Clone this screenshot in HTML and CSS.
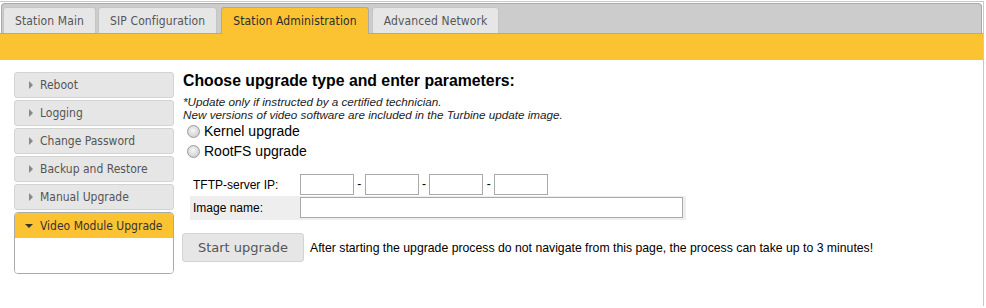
FILE: index.html
```html
<!DOCTYPE html>
<html>
<head>
<meta charset="utf-8">
<link rel="stylesheet" href="styles.css">
</head>
<body>
<div class="widget">
  <ul class="tabnav">
    <li class="tab">Station Main</li>
    <li class="tab">SIP Configuration</li>
    <li class="tab active">Station Administration</li>
    <li class="tab">Advanced Network</li>
  </ul>
  <div class="band"></div>
  <div class="page">
    <div class="side">
      <div class="item"><span class="tri-r"></span>Reboot</div>
      <div class="item"><span class="tri-r"></span>Logging</div>
      <div class="item"><span class="tri-r"></span>Change Password</div>
      <div class="item"><span class="tri-r"></span>Backup and Restore</div>
      <div class="item"><span class="tri-r"></span>Manual Upgrade</div>
      <div class="acc">
        <div class="acc-head"><span class="tri-d"></span>Video Module Upgrade</div>
        <div class="acc-body"></div>
      </div>
    </div>
    <div class="main">
      <h2 class="title">Choose upgrade type and enter parameters:</h2>
      <p class="note">*Update only if instructed by a certified technician.<br>New versions of video software are included in the Turbine update image.</p>
      <label class="opt"><input type="radio" name="t" class="radio">Kernel upgrade</label>
      <label class="opt"><input type="radio" name="t" class="radio">RootFS upgrade</label>
      <table class="params">
        <tr>
          <td class="lbl">TFTP-server IP:</td>
          <td class="val"><input class="ip" type="text"> - <input class="ip" type="text"> - <input class="ip" type="text"> - <input class="ip" type="text"></td>
        </tr>
        <tr class="alt">
          <td class="lbl">Image name:</td>
          <td class="val"><input class="img" type="text"></td>
        </tr>
      </table>
      <div class="actions">
        <button class="btn">Start upgrade</button>
        <span class="warn">After starting the upgrade process do not navigate from this page, the process can take up to 3 minutes!</span>
      </div>
    </div>
  </div>
</div>
</body>
</html>
```

FILE: styles.css
```css
html, body {
  margin: 0;
  padding: 0;
  background: #fff;
}
.widget {
  margin-top: 1px;
  width: 984px;
  border-top: 1px solid #c8c8c8;
  border-right: 1px solid #c8c8c8;
  padding-top: 1px;
  height: 305px;
  box-sizing: border-box;
}
.tabnav {
  list-style: none;
  margin: 0 1px 0 1px;
  padding: 3px 0 0 1px;
  height: 26px;
  background: #cccccc;
  border: 1px solid #aaaaaa;
  border-bottom: 0;
  border-radius: 4px 4px 0 0;
  display: flex;
  align-items: flex-end;
  gap: 2px;
}
.tab {
  font-family: "DejaVu Sans Condensed", "DejaVu Sans", sans-serif;
  font-stretch: condensed;
  font-size: 12px;
  letter-spacing: 0.12px;
  color: #555;
  background: #e6e6e6;
  border: 1px solid #c5c5c5;
  border-bottom: 0;
  border-radius: 3px 3px 0 0;
  padding: 1px 11px 0 11px;
  height: 24px;
  line-height: 24px;
}
.tab.active {
  background: #fbc232;
  border-color: #aaaaaa;
  color: #2b2b2b;
  height: 25px;
  margin: 0 1px -1px 2px;
}
.band {
  height: 26px;
  background: #fbc232;
  border-top: 1px solid #aaaaaa;
  margin-left: -1px;
}
.page {
  display: flex;
  padding: 12px 0 0 14px;
}
.side {
  width: 160px;
  display: flex;
  flex-direction: column;
  gap: 2px;
  font-family: "DejaVu Sans Condensed", "DejaVu Sans", sans-serif;
  font-stretch: condensed;
  font-size: 12px;
}
.item {
  height: 24px;
  line-height: 24px;
  background: #e6e6e6;
  border: 1px solid #d3d3d3;
  border-radius: 3px;
  color: #555;
  display: flex;
  align-items: center;
}
.tri-r {
  width: 0;
  height: 0;
  border-left: 4px solid #888;
  border-top: 4px solid transparent;
  border-bottom: 4px solid transparent;
  margin: 0 7px 0 14px;
}
.acc {
  border: 1px solid #aaaaaa;
  border-radius: 4px;
  overflow: hidden;
}
.acc-head {
  height: 25px;
  background: #fbc232;
  color: #333;
  display: flex;
  align-items: center;
}
.tri-d {
  width: 0;
  height: 0;
  border-top: 4px solid #333;
  border-left: 4px solid transparent;
  border-right: 4px solid transparent;
  margin: 0 7px 0 10px;
}
.acc-body {
  height: 35px;
  background: #fff;
}
.main {
  margin-left: 9px;
  font-family: "Liberation Sans", Arial, sans-serif;
  color: #000;
}
.title {
  font-size: 15.8px;
  font-weight: bold;
  margin: 0;
  line-height: 18px;
}
.note {
  margin: 6px 0 0 0;
  font-size: 11.7px;
  font-style: italic;
  line-height: 12.5px;
  color: #222;
}
.opt {
  display: flex;
  align-items: center;
  font-size: 14px;
  height: 20px;
  margin-left: 4px;
}
.radio {
  appearance: none;
  -webkit-appearance: none;
  width: 13px;
  height: 13px;
  margin: 0 4px 0 0;
  border: 1px solid #9a9a9a;
  border-radius: 50%;
  background: radial-gradient(circle at 45% 40%, #f7f7f7 0, #e2e2e2 40%, #c6c6c6 100%);
  box-sizing: border-box;
}
.params {
  border-collapse: collapse;
  margin: 12px 0 0 7px;
  font-size: 12px;
}
.params td {
  padding: 1px 3px;
}
.params .lbl {
  width: 100px;
  padding-right: 4px;
}
.params .alt {
  background: #eeeeee;
}
.params .alt td {
  padding-top: 1px;
  padding-bottom: 2px;
}
.ip {
  width: 54px;
  height: 21px;
  box-sizing: border-box;
  border: 1px solid #a9a9a9;
  margin: 0;
  padding: 0;
  vertical-align: middle;
}
.img {
  width: 383px;
  height: 21px;
  box-sizing: border-box;
  border: 1px solid #a9a9a9;
  margin: 0;
  padding: 0;
  vertical-align: middle;
}
.actions {
  display: flex;
  align-items: center;
  margin-top: 13px;
  margin-left: -1px;
}
.btn {
  font-family: "DejaVu Sans", sans-serif;
  font-size: 13px;
  color: #555;
  background: #e6e6e6;
  border: 1px solid #d3d3d3;
  border-radius: 3px;
  width: 122px;
  height: 29px;
  padding: 0;
}
.warn {
  font-size: 12.25px;
  margin-left: 6px;
}
```
